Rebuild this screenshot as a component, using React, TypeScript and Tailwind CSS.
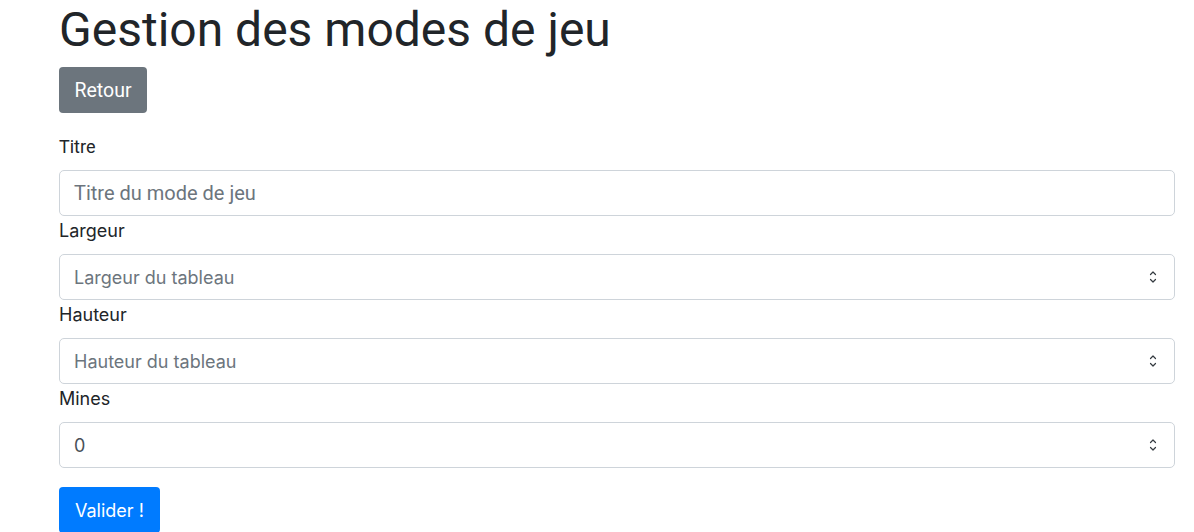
import React from "react";

const roboto = { fontFamily: "Roboto, 'Liberation Sans', sans-serif" };
const inter = { fontFamily: "Inter, 'Liberation Sans', sans-serif" };

function Arrows() {
  return (
    <svg width="8" height="16" viewBox="0 0 8 16" fill="none" stroke="#343a40" strokeWidth="1.2" strokeLinecap="round" strokeLinejoin="round">
      <path d="M1.5 5.5 L4 3 L6.5 5.5" />
      <path d="M1.5 10.5 L4 13 L6.5 10.5" />
    </svg>
  );
}

function SelectBox({ text, muted }: { text: string; muted?: boolean }) {
  return (
    <div className="flex h-[46px] items-center justify-between rounded-[5px] border border-[#ced4da] bg-white pl-[14px] pr-[17px]">
      <span className={`text-[18px] ${muted ? "text-[#6c757d]" : "text-[#495057]"}`} style={inter}>
        {text}
      </span>
      <Arrows />
    </div>
  );
}

function Label({ children, font }: { children: React.ReactNode; font: React.CSSProperties }) {
  return (
    <div className="mb-[10px] h-[28px] overflow-visible text-[18px] leading-[30px] text-[#212529]" style={font}>
      {children}
    </div>
  );
}

export default function App() {
  return (
    <div className="min-h-[532px] bg-white pl-[59px] pr-[19px]">
      <h1 className="pt-[2px] text-[48px] leading-[56px] font-normal text-[#212529]" style={roboto}>
        Gestion des modes de jeu
      </h1>
      <div className="mt-[9px]">
        <button className="h-[46px] rounded-[4px] bg-[#6c757d] px-[15.5px] pt-[2px] text-[19.5px] text-white" style={roboto}>
          Retour
        </button>
      </div>
      <div className="mt-[19px]">
        <Label font={roboto}>Titre</Label>
        <div className="flex h-[46px] items-center rounded-[5px] border border-[#ced4da] bg-white pl-[14px]">
          <span className="text-[20px] text-[#6c757d]" style={roboto}>
            Titre du mode de jeu
          </span>
        </div>
        <Label font={inter}>Largeur</Label>
        <SelectBox text="Largeur du tableau" muted />
        <Label font={inter}>Hauteur</Label>
        <SelectBox text="Hauteur du tableau" muted />
        <Label font={inter}>Mines</Label>
        <SelectBox text="0" />
      </div>
      <div className="mt-[19px]">
        <button className="h-[46px] rounded-[4px] bg-[#007bff] px-[16px] text-[18px] text-white" style={inter}>
          Valider !
        </button>
      </div>
    </div>
  );
}
